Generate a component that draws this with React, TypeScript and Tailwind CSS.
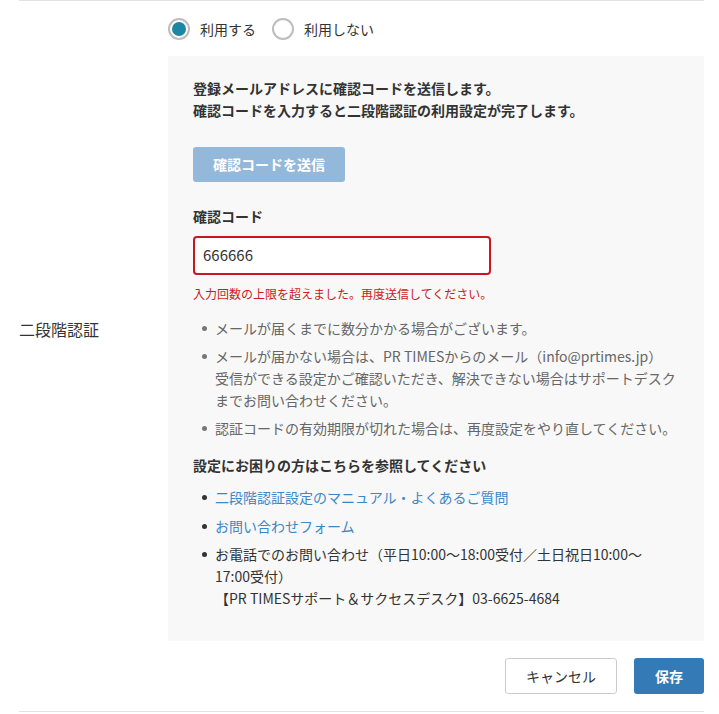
import React from "react";

const font = { fontFamily: '"Noto Sans CJK JP", "Noto Sans", sans-serif' };

function Radio({ checked, label }: { checked: boolean; label: string }) {
  return (
    <label className="flex items-center gap-[10px] cursor-pointer">
      <span className="w-[22px] h-[22px] rounded-full border-2 border-[#bdbdbd] bg-white flex items-center justify-center">
        {checked && <span className="w-[14px] h-[14px] rounded-full bg-[#1d86a3]" />}
      </span>
      <span className="text-[14px] leading-[22px] text-[#333]">{label}</span>
    </label>
  );
}

function Bullet({ children, dark }: { children: React.ReactNode; dark?: boolean }) {
  return (
    <li className="flex">
      <span className="w-[22px] shrink-0 flex justify-center pt-[9px]">
        <span className={`w-[5px] h-[5px] rounded-full ${dark ? "bg-[#333]" : "bg-[#777]"}`} />
      </span>
      <span className="flex-1">{children}</span>
    </li>
  );
}

export default function App() {
  return (
    <div className="bg-white min-h-[714px] w-[719px]" style={font}>
      <div className="ml-[19px] mr-[15px] border-t border-[#e3e3e3] mt-0">
        <div className="flex">
          <div className="w-[149px] shrink-0 flex items-center">
            <span className="text-[16px] leading-[24px] text-[#333]">二段階認証</span>
          </div>
          <div className="flex-1 pb-[16px]">
            <div className="flex items-center gap-[16px] pt-[17px] pb-[16px]">
              <Radio checked label="利用する" />
              <Radio checked={false} label="利用しない" />
            </div>
            <div className="bg-[#f8f8f8] pt-[21px] pb-[32px] px-[25px]">
              <p className="text-[14px] leading-[22px] font-bold text-[#333]">
                登録メールアドレスに確認コードを送信します。
                <br />
                確認コードを入力すると二段階認証の利用設定が完了します。
              </p>
              <button className="mt-[26px] w-[152px] h-[35px] rounded-[3px] bg-[#94b8da] text-white text-[14px] font-bold flex items-center justify-center">
                確認コードを送信
              </button>
              <div className="mt-[23px] text-[14px] leading-[22px] font-bold text-[#333]">確認コード</div>
              <div className="mt-[9px] w-[298px] h-[39px] rounded-[4px] border-2 border-[#c9161f] bg-white flex items-center px-[8px]">
                <span className="text-[15px] text-[#333]">666666</span>
              </div>
              <div className="mt-[10px] text-[12px] leading-[18px] text-[#cc1a22]">
                入力回数の上限を超えました。再度送信してください。
              </div>
              <ul className="mt-[14px] text-[14px] leading-[22px] text-[#666] flex flex-col gap-[6px]">
                <Bullet>メールが届くまでに数分かかる場合がございます。</Bullet>
                <Bullet>
                  メールが届かない場合は、PR TIMESからのメール（info@prtimes.jp）
                  <br />
                  受信ができる設定かご確認いただき、解決できない場合はサポートデスク
                  <br />
                  までお問い合わせください。
                </Bullet>
                <Bullet>認証コードの有効期限が切れた場合は、再度設定をやり直してください。</Bullet>
              </ul>
              <div className="mt-[15px] text-[14px] leading-[22px] font-bold text-[#333]">
                設定にお困りの方はこちらを参照してください
              </div>
              <ul className="mt-[10px] text-[14px] leading-[22px] text-[#333] flex flex-col gap-[6.5px]">
                <Bullet dark>
                  <a className="text-[#3b87c7]">二段階認証設定のマニュアル・よくあるご質問</a>
                </Bullet>
                <Bullet dark>
                  <a className="text-[#3b87c7]">お問い合わせフォーム</a>
                </Bullet>
                <Bullet dark>
                  お電話でのお問い合わせ（平日10:00〜18:00受付／土日祝日10:00〜
                  <br />
                  17:00受付）
                  <br />
                  【PR TIMESサポート＆サクセスデスク】03-6625-4684
                </Bullet>
              </ul>
            </div>
          </div>
        </div>
        <div className="flex justify-end gap-[17px] pt-[1px] pb-[17px] border-b border-[#e3e3e3]">
          <button className="w-[112px] h-[36px] rounded-[3px] border border-[#cccccc] bg-white text-[14px] text-[#333]">
            キャンセル
          </button>
          <button className="w-[70px] h-[36px] rounded-[3px] bg-[#337ab7] text-[14px] font-bold text-white">
            保存
          </button>
        </div>
      </div>
    </div>
  );
}
